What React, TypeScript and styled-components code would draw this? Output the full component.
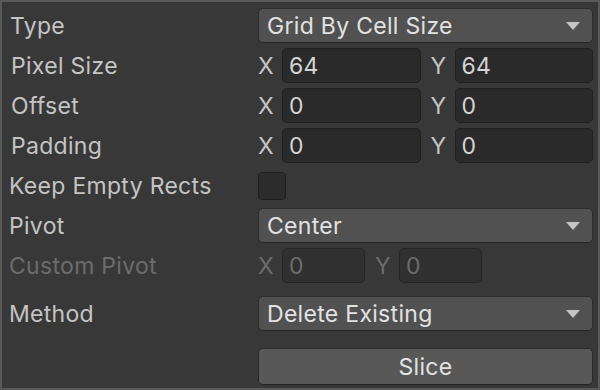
import React from "react";
import styled, { createGlobalStyle } from "styled-components";

const GlobalStyle = createGlobalStyle`
  html, body {
    margin: 0;
    padding: 0;
    background: #383838;
  }
`;

const Panel = styled.div`
  box-sizing: border-box;
  width: 600px;
  height: 390px;
  background: #383838;
  border: 2px solid #595959;
  padding: 6px 6px 0 6px;
  font-family: Inter, "Noto Sans", sans-serif;
  font-size: 23px;
  letter-spacing: 0.3px;
  color: #c4c4c4;
  display: grid;
  grid-template-columns: 250px 335px;
  grid-auto-rows: auto;
  align-content: start;
  row-gap: 5px;
`;

const Label = styled.div<{ $dim?: boolean; $indent?: number; $mt?: number }>`
  display: flex;
  align-items: center;
  height: 35px;
  margin-top: ${(p) => p.$mt ?? 0}px;
  padding-left: ${(p) => p.$indent ?? 2}px;
  color: ${(p) => (p.$dim ? "#6c6c6c" : "#c4c4c4")};
  white-space: nowrap;
`;

const Control = styled.div<{ $mt?: number }>`
  display: flex;
  align-items: center;
  min-height: 35px;
  margin-top: ${(p) => p.$mt ?? 0}px;
`;

const Dropdown = styled.div`
  box-sizing: border-box;
  flex: 1;
  height: 35px;
  display: flex;
  align-items: center;
  justify-content: space-between;
  padding: 0 12px 0 8px;
  background: #515151;
  border: 1px solid #2e2e2e;
  border-bottom-color: #262626;
  border-radius: 5px;
  color: #e2e2e2;
`;

const Arrow = styled.span`
  width: 0;
  height: 0;
  border-left: 7px solid transparent;
  border-right: 7px solid transparent;
  border-top: 8px solid #c4c4c4;
`;

const AxisLabel = styled.span<{ $dim?: boolean }>`
  width: 24px;
  flex-shrink: 0;
  color: ${(p) => (p.$dim ? "#6c6c6c" : "#c4c4c4")};
`;

const Field = styled.div<{ $dim?: boolean; $w?: number }>`
  box-sizing: border-box;
  ${(p) => (p.$w ? `width: ${p.$w}px;` : "flex: 1;")}
  height: 35px;
  display: flex;
  align-items: center;
  padding-left: 6px;
  background: ${(p) => (p.$dim ? "#303030" : "#2a2a2a")};
  border: 1px solid ${(p) => (p.$dim ? "#262626" : "#1f1f1f")};
  border-radius: 5px;
  color: ${(p) => (p.$dim ? "#6c6c6c" : "#d4d4d4")};
  & + ${AxisLabel} {
    margin-left: 10px;
  }
`;

const Checkbox = styled.div`
  box-sizing: border-box;
  width: 28px;
  height: 28px;
  background: #2c2c2c;
  border: 1px solid #1f1f1f;
  border-radius: 4px;
`;

const Button = styled.div`
  box-sizing: border-box;
  flex: 1;
  height: 37px;
  display: flex;
  align-items: center;
  justify-content: center;
  background: #585858;
  border: 1px solid #2a2a2a;
  border-bottom-color: #222;
  border-radius: 5px;
  color: #e2e2e2;
`;

const Vector = ({ x, y, dim, w }: { x: string; y: string; dim?: boolean; w?: number }) => (
  <>
    <AxisLabel $dim={dim}>X</AxisLabel>
    <Field $dim={dim} $w={w}>{x}</Field>
    <AxisLabel $dim={dim}>Y</AxisLabel>
    <Field $dim={dim} $w={w}>{y}</Field>
  </>
);

export default function App() {
  return (
    <>
      <GlobalStyle />
      <Panel>
        <Label>Type</Label>
        <Control>
          <Dropdown>
            Grid By Cell Size
            <Arrow />
          </Dropdown>
        </Control>

        <Label $indent={3}>Pixel Size</Label>
        <Control>
          <Vector x="64" y="64" />
        </Control>

        <Label $indent={3}>Offset</Label>
        <Control>
          <Vector x="0" y="0" />
        </Control>

        <Label $indent={3}>Padding</Label>
        <Control>
          <Vector x="0" y="0" />
        </Control>

        <Label $indent={1}>Keep Empty Rects</Label>
        <Control>
          <Checkbox />
        </Control>

        <Label $indent={1}>Pivot</Label>
        <Control>
          <Dropdown>
            Center
            <Arrow />
          </Dropdown>
        </Control>

        <Label $indent={1} $dim>
          Custom Pivot
        </Label>
        <Control>
          <Vector x="0" y="0" dim w={83} />
        </Control>

        <Label $indent={1} $mt={8}>
          Method
        </Label>
        <Control $mt={8}>
          <Dropdown>
            Delete Existing
            <Arrow />
          </Dropdown>
        </Control>

        <div />
        <Control $mt={12}>
          <Button>Slice</Button>
        </Control>
      </Panel>
    </>
  );
}
